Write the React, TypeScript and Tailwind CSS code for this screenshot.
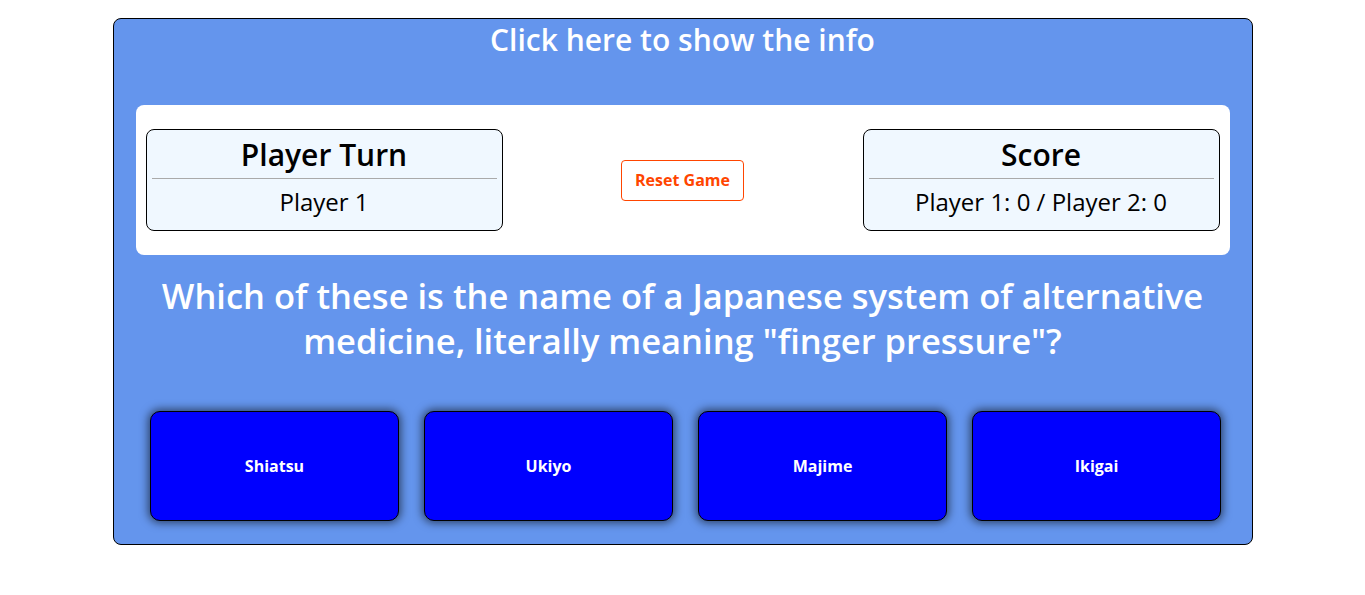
import React from 'react';

const answers = ['Shiatsu', 'Ukiyo', 'Majime', 'Ikigai'];

const InfoCard = ({ title, value }: { title: string; value: string }) => (
  <div className="w-[357px] h-[102px] bg-[#F0F8FF] border border-black rounded-[8px] px-[5px] flex flex-col items-center">
    <div className="text-[30px] leading-[46px] font-semibold text-black mt-[2px]">{title}</div>
    <div className="w-full h-px bg-[#aaaaaa]" />
    <div className="text-[24px] leading-[46px] font-medium text-black">{value}</div>
  </div>
);

export default function App() {
  return (
    <div className="w-full min-h-[595px] bg-white pt-[18px]" style={{ fontFamily: '"Open Sans", "Noto Sans", sans-serif' }}>
      <div className="mx-auto w-[1140px] h-[527px] bg-[#6495ED] border border-black rounded-[8px] flex flex-col items-center">
        <h1 className="text-white text-[30px] leading-[42px] font-semibold cursor-pointer">Click here to show the info</h1>
        <div className="mt-[44px] w-[1094px] h-[150px] bg-white rounded-[8px] flex items-center justify-between px-[10px]">
          <InfoCard title="Player Turn" value="Player 1" />
          <button className="h-[41px] px-[13px] border border-[#FF4500] rounded-[4px] text-[#FF4500] text-[16px] font-bold bg-white">Reset Game</button>
          <InfoCard title="Score" value="Player 1: 0 / Player 2: 0" />
        </div>
        <p className="mt-[18px] w-[1090px] text-center text-white text-[34.5px] leading-[45px] font-semibold">
          Which of these is the name of a Japanese system of alternative medicine, literally meaning "finger pressure"?
        </p>
        <div className="mt-[48px] flex gap-[25px] ml-[6px]">
          {answers.map(a => (
            <button key={a} className="w-[249px] h-[110px] bg-[#0000FF] border border-black rounded-[10px] text-white text-[16px] font-bold shadow-[0_0_8px_2px_rgba(0,0,0,0.55)]">
              {a}
            </button>
          ))}
        </div>
      </div>
    </div>
  );
}
